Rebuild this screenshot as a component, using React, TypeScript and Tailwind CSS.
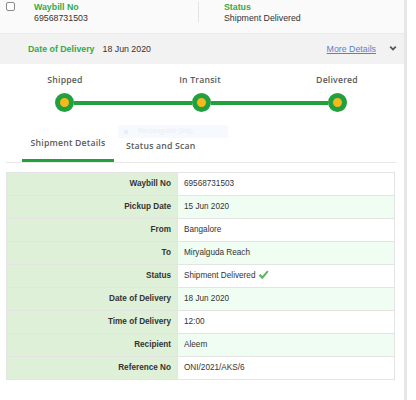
import React from "react";

const rows: { label: string; value: string; check?: boolean }[] = [
  { label: "Waybill No", value: "69568731503" },
  { label: "Pickup Date", value: "15 Jun 2020" },
  { label: "From", value: "Bangalore" },
  { label: "To", value: "Miryalguda Reach" },
  { label: "Status", value: "Shipment Delivered", check: true },
  { label: "Date of Delivery", value: "18 Jun 2020" },
  { label: "Time of Delivery", value: "12:00" },
  { label: "Recipient", value: "Aleem" },
  { label: "Reference No", value: "ONI/2021/AKS/6" },
];

const Circle: React.FC = () => (
  <span className="w-[19px] h-[19px] rounded-full border-[5px] border-[#23a03e] bg-[#f6b91c] shrink-0" />
);

const CheckMark: React.FC = () => (
  <svg width="11" height="10" viewBox="0 0 11 10" className="inline-block ml-[3px] -mt-[2px]">
    <path d="M0.5 5.5 L2.5 4 L4.3 6 L9.2 0.6 L10.6 1.8 L4.4 9.2 Z" fill="#5cb85c" />
  </svg>
);

const ShipmentCard: React.FC = () => {
  return (
    <div className="w-[404px] h-[400px] bg-white font-['Liberation_Sans',Arial,sans-serif] relative">
      {/* summary row */}
      <div className="flex h-[34px] bg-[#fafafa] border-b border-[#ebebeb] text-[8.8px] leading-[11px]">
        <div className="w-[34px] pl-[6px] pt-[2px]">
          <span className="block w-[9px] h-[9px] rounded-[2px] border border-[#8a8a8a] bg-white" />
        </div>
        <div className="w-[164px] pt-[2px]">
          <div className="font-bold text-[#35a94b]">Waybill No</div>
          <div className="text-[#333]">69568731503</div>
        </div>
        <div className="w-px h-[20px] mt-[2px] bg-[#e3e3e3]" />
        <div className="pl-[25px] pt-[2px]">
          <div className="font-bold text-[#35a94b]">Status</div>
          <div className="text-[#333]">Shipment Delivered</div>
        </div>
      </div>

      {/* date band */}
      <div className="flex items-center h-[30px] bg-[#f2f2f2] pl-[28px] pr-[7px] text-[8.8px] leading-[11px]">
        <span className="font-bold text-[#35a94b]">Date of Delivery</span>
        <span className="ml-[8px] text-[#333]">18 Jun 2020</span>
        <span className="ml-auto text-[#5b80c9] underline underline-offset-[1px]">More Details</span>
        <svg width="8" height="6" viewBox="0 0 8 6" className="ml-[13px]">
          <path d="M0.6 1.2 L1.8 0 L4 2.3 L6.2 0 L7.4 1.2 L4 4.8 Z" fill="#555" />
        </svg>
      </div>

      {/* stepper */}
      <div className="pt-[11px] font-['Open_Sans',sans-serif] font-semibold text-[8.7px] leading-[11px] text-[#5a5a5a] tracking-[0.2px]">
        <div className="flex ml-[25px]">
          <div className="w-[80px] text-center">Shipped</div>
          <div className="w-[80px] ml-[55px] text-center">In Transit</div>
          <div className="w-[80px] ml-[57px] text-center">Delivered</div>
        </div>
        <div className="flex items-center ml-[55px] w-[292px] mt-[7px]">
          <Circle />
          <span className="flex-1 h-[4px] bg-[#23a03e]" />
          <Circle />
          <span className="flex-1 h-[4px] bg-[#23a03e]" />
          <Circle />
        </div>

        {/* tabs */}
        <div className="flex items-end ml-[6px] w-[390px] mt-[25px] border-b border-[#e8e8e8]">
          <div className="ml-[16px] w-[92px] text-center pt-[1px] pb-[10px] border-b-[3px] border-[#23a03e]">
            Shipment Details
          </div>
          <div className="ml-[12px] pb-[10px]">Status and Scan</div>
        </div>
      </div>

      {/* faint snip overlay left in the screenshot */}
      <div className="absolute left-[118px] top-[125px] w-[110px] h-[13px] bg-[#f6f9fd] flex items-center pl-[6px] text-[7px] text-[#e9eef5] font-['Open_Sans',sans-serif]">
        <span className="w-[4px] h-[4px] bg-[#e9eef5]" />
        <span className="ml-[10px]">Rectangular Snip</span>
      </div>

      {/* details table */}
      <table className="ml-[6px] mt-[9px] w-[389px] border-collapse text-[8.2px] text-[#333]">
        <tbody>
          {rows.map((r, i) => (
            <tr key={r.label} className="h-[23px]">
              <td className="w-[171px] p-0 pr-[6px] text-right font-bold bg-[#dff0d8] border border-[#e4e4e4]">
                {r.label}
              </td>
              <td
                className={`p-0 pl-[6px] border border-[#e4e4e4] ${
                  i % 2 === 1 ? "bg-[#f0fdf3]" : "bg-white"
                }`}
              >
                {r.value}
                {r.check && <CheckMark />}
              </td>
            </tr>
          ))}
        </tbody>
      </table>
    </div>
  );
};

export default function App() {
  return (
    <div className="flex w-[416px] h-[400px] bg-white overflow-hidden">
      <ShipmentCard />
      <div className="w-[3px] h-full bg-[#e6e6e6]" />
    </div>
  );
}
